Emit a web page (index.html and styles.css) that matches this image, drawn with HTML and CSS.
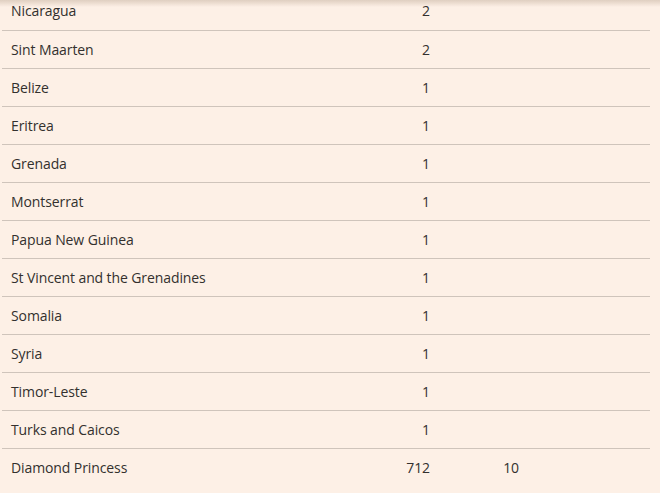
FILE: index.html
```html
<!DOCTYPE html>
<html>
<head>
<meta charset="utf-8">
<link rel="stylesheet" href="styles.css">
</head>
<body>
<div class="shade"></div>
<table class="tbl">
<tbody>
<tr><td class="name">Nicaragua</td><td class="num">2</td><td class="num2"></td><td class="rest"></td></tr>
<tr><td class="name">Sint Maarten</td><td class="num">2</td><td class="num2"></td><td class="rest"></td></tr>
<tr><td class="name">Belize</td><td class="num">1</td><td class="num2"></td><td class="rest"></td></tr>
<tr><td class="name">Eritrea</td><td class="num">1</td><td class="num2"></td><td class="rest"></td></tr>
<tr><td class="name">Grenada</td><td class="num">1</td><td class="num2"></td><td class="rest"></td></tr>
<tr><td class="name">Montserrat</td><td class="num">1</td><td class="num2"></td><td class="rest"></td></tr>
<tr><td class="name">Papua New Guinea</td><td class="num">1</td><td class="num2"></td><td class="rest"></td></tr>
<tr><td class="name">St Vincent and the Grenadines</td><td class="num">1</td><td class="num2"></td><td class="rest"></td></tr>
<tr><td class="name">Somalia</td><td class="num">1</td><td class="num2"></td><td class="rest"></td></tr>
<tr><td class="name">Syria</td><td class="num">1</td><td class="num2"></td><td class="rest"></td></tr>
<tr><td class="name">Timor-Leste</td><td class="num">1</td><td class="num2"></td><td class="rest"></td></tr>
<tr><td class="name">Turks and Caicos</td><td class="num">1</td><td class="num2"></td><td class="rest"></td></tr>
<tr class="last"><td class="name">Diamond Princess</td><td class="num">712</td><td class="num2">10</td><td class="rest"></td></tr>
</tbody>
</table>
</body>
</html>
```
FILE: styles.css
```css
html, body {
  margin: 0;
  padding: 0;
  background: #fdf0e6;
}
body {
  font-family: "Open Sans", "Liberation Sans", sans-serif;
  color: #33302e;
  overflow: hidden;
}
.shade {
  position: fixed;
  top: 0;
  left: 0;
  right: 0;
  height: 7px;
  background: linear-gradient(to bottom, rgba(120, 90, 60, 0.22), rgba(120, 90, 60, 0));
  z-index: 2;
}
.tbl {
  border-collapse: collapse;
  margin: -8px 0 0 2px;
  width: 648px;
  font-size: 14px;
  letter-spacing: -0.1px;
}
.tbl td {
  height: 38px;
  padding: 0;
  box-sizing: border-box;
  border-bottom: 1px solid #cfc4bb;
  vertical-align: middle;
}
.tbl tr.last td {
  border-bottom: none;
}
.name {
  width: 340px;
  padding-left: 9px !important;
}
.num {
  width: 88px;
  text-align: right;
}
.num2 {
  width: 89px;
  text-align: right;
}
```
